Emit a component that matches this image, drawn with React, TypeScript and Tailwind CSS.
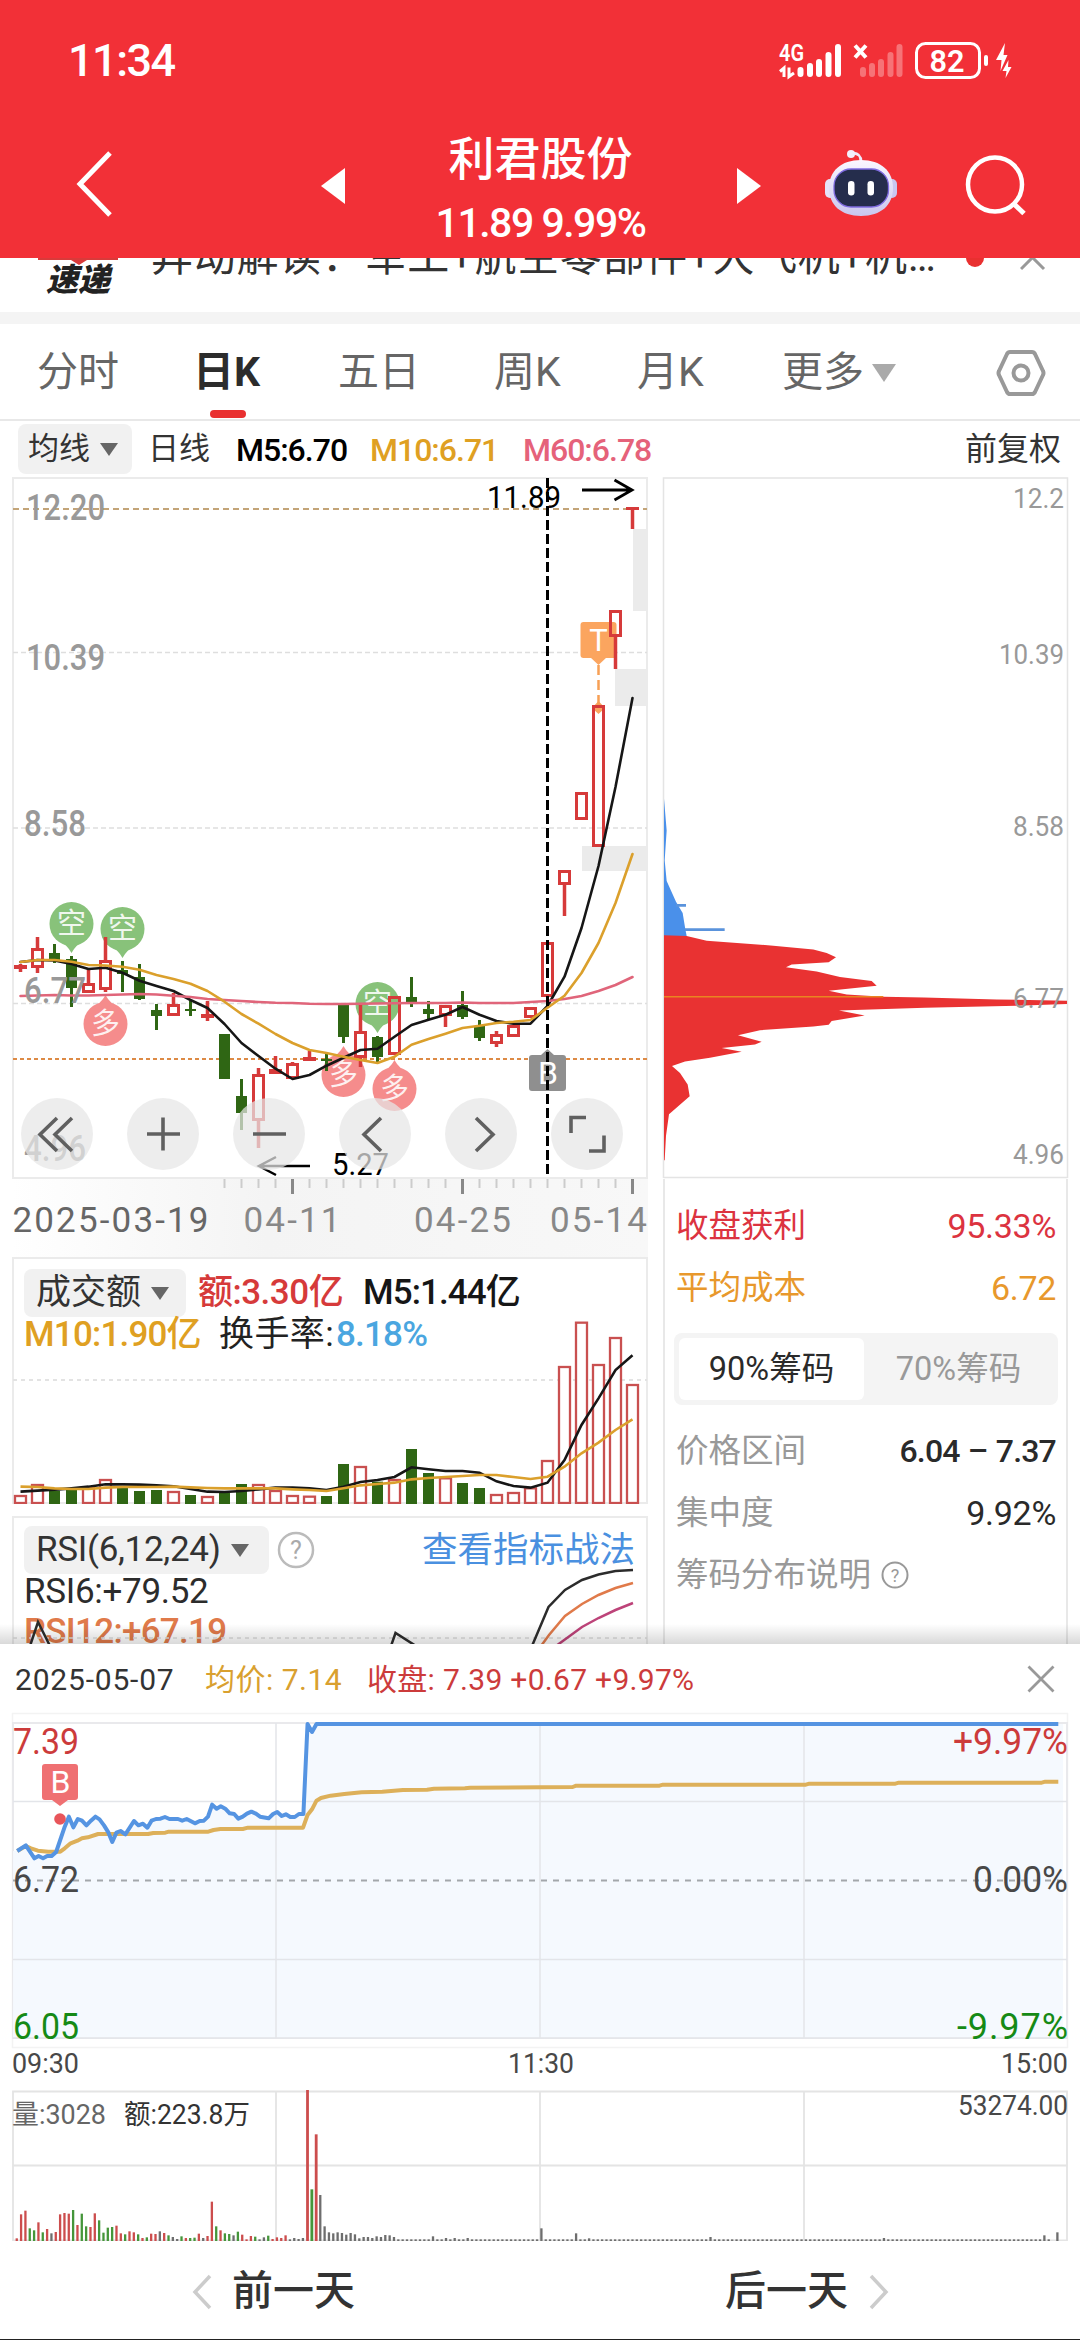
import React from "react";

type Side = "r" | "g";
type Candle = [Side, number, number, number, number];

const RED = "#d63a3a";
const GREEN = "#2f6614";
const GOLD = "#dba02c";

const px = (i: number) => 20.5 + 17 * i;

// side, high, body top, body bottom, low
const candles: Candle[] = [
  ["r", 964, 965, 969, 972], ["r", 937, 948, 968, 973], ["g", 944, 953, 961, 963], ["g", 956, 959, 988, 1007],
  ["r", 969, 983, 993, 993], ["r", 937, 960, 990, 992], ["g", 961, 970, 974, 992], ["g", 964, 977, 999, 1000],
  ["g", 1004, 1010, 1016, 1030], ["r", 993, 1004, 1016, 1016], ["g", 1001, 1009, 1011, 1016], ["r", 1001, 1014, 1018, 1021],
  ["g", 1034, 1034, 1079, 1079], ["g", 1079, 1096, 1113, 1130], ["r", 1068, 1074, 1121, 1148], ["r", 1056, 1069, 1074, 1074],
  ["r", 1062, 1063, 1079, 1079], ["r", 1051, 1057, 1061, 1061], ["g", 1054, 1059, 1061, 1071], ["g", 1004, 1004, 1037, 1043],
  ["r", 1003, 1031, 1058, 1067], ["g", 1036, 1037, 1057, 1062], ["r", 996, 996, 1055, 1055], ["g", 977, 997, 1002, 1007],
  ["g", 1001, 1009, 1014, 1019], ["r", 1005, 1005, 1016, 1027], ["g", 991, 1005, 1017, 1019], ["g", 1020, 1026, 1038, 1041],
  ["r", 1031, 1034, 1044, 1047], ["r", 1025, 1025, 1037, 1037], ["r", 1007, 1007, 1018, 1018], ["r", 942, 942, 997, 997],
  ["r", 870, 870, 885, 916], ["r", 792, 792, 820, 820], ["r", 705, 705, 847, 847], ["r", 610, 610, 637, 669],
  ["r", 507, 507, 509, 529],
];

const ma5 = [962, 960, 960.5, 964, 969, 967.7, 972.7, 980.7, 986, 991, 1000, 1008, 1024, 1043, 1056, 1068.7, 1079, 1075, 1065.7, 1057.7, 1050, 1048.7, 1036.7, 1025, 1019.7, 1014.7, 1007, 1014.7, 1021, 1023.7, 1023.7, 1006, 976.7, 928, 866, 787, 698];
const ma10 = [962, 960, 960, 961.7, 965, 965.5, 966.7, 969.7, 975, 979, 983.7, 991, 1001.7, 1014, 1023.7, 1034, 1043, 1050, 1053, 1056.7, 1060, 1063, 1056.7, 1044.7, 1039, 1033.7, 1028, 1025.7, 1023, 1021.7, 1020, 1007.7, 995.7, 973, 943, 903, 854];
const ma60 = [996, 995.5, 995, 995.5, 995.5, 995, 994.5, 994, 994.5, 995.7, 997, 999, 1000, 1001, 1002, 1002.7, 1003, 1003.7, 1004, 1004, 1003.7, 1003.5, 1003.3, 1003, 1003, 1003, 1002.5, 1003, 1003, 1003, 1002, 1001, 999, 996, 991, 985, 977];

const line = (ys: number[], from = 0) => ys.map((y, i) => `${px(i)},${y}`).slice(from).join(" ");

const volumes = [765, 732, 752, 745, 740, 717, 742, 753, 750, 753, 765, 768, 758, 732, 732, 750, 765, 767, 768, 672, 678, 725, 717, 627, 699, 712, 729, 744, 762, 756, 742, 660, 378, 245, 372, 291, 432].map((v) => 1240 + v / 3);
const vol5 = [755, 752, 749, 745, 740, 733, 733, 734, 736, 739, 747, 755, 756, 753, 748, 743, 743, 745, 750, 740, 726, 720, 711, 682, 688, 693, 693, 698, 724, 738, 743, 728, 660, 555, 475, 390, 346].map((v) => 1240 + v / 3);
const vol10 = [740, 741, 745, 747, 747, 743, 741, 741, 741, 740, 742, 744, 745, 745, 745, 745, 748, 750, 753, 745, 736, 732, 728, 718, 714, 711, 708, 705, 705, 711, 717, 710, 680, 640, 608, 570, 538].map((v) => 1240 + v / 3);

interface LabelProps {
  x: number;
  y: number;
  w: number;
  size: number;
  fill: string;
  weight?: number;
  spaced?: boolean;
  children: React.ReactNode;
}
/** y is the baseline, w the drawn width. */
function Label({ x, y, w, size, fill, weight = 400, spaced, children }: LabelProps) {
  return (
    <text x={x} y={y} fontSize={size} fontWeight={weight} fill={fill} textLength={w} lengthAdjust={spaced ? "spacing" : "spacingAndGlyphs"}>
      {children}
    </text>
  );
}

function Bubble({ x, y, up, text }: { x: number; y: number; up?: boolean; text: string }) {
  const fill = up ? "#f58c8c" : "#88c27a";
  const tip = up ? `M${x - 15},${y - 15} Q${x - 4},${y - 21} ${x},${y - 29} Q${x + 4},${y - 21} ${x + 15},${y - 15}Z` : `M${x - 15},${y + 15} Q${x - 4},${y + 21} ${x},${y + 29} Q${x + 4},${y + 21} ${x + 15},${y + 15}Z`;
  return (
    <g>
      <circle cx={x} cy={y} r="22" fill={fill} />
      <path d={tip} fill={fill} />
      <text x={x} y={y + 10} fontSize="29" fill="#fff" fillOpacity=".88" textAnchor="middle">{text}</text>
    </g>
  );
}

function Status() {
  return (
    <svg className="block h-[50px] w-[250px]" viewBox="770 35 250 50">
      <text x="779" y="60" fontSize="23" fontWeight="600" fill="#fff" textLength="25" lengthAdjust="spacingAndGlyphs">4G</text>
      <path d="M784 76V67l-4 3.500M789 66.500v9l5-3.500" stroke="#fff" strokeWidth="3" fill="none" />
      <g stroke="#fff" strokeWidth="6" strokeLinecap="round">
        <path d="M800.5 69V73M810 65V73M819 61V73M828.500 54V73M838 46V73" />
        <path d="M863 69V73M872 65V73M881 61V73M890.500 54V73M899.500 46V73" opacity=".32" />
      </g>
      <path d="M855 44.500l11 12M866 44.500l-11 12" stroke="#fff" strokeWidth="4" />
      <rect x="916.500" y="42.500" width="63" height="34" rx="9" fill="none" stroke="#fff" strokeWidth="3" />
      <rect x="984" y="54" width="4" height="11" rx="2" fill="#fff" />
      <text x="929.500" y="71" fontSize="32" fontWeight="600" fill="#fff" textLength="35" lengthAdjust="spacingAndGlyphs">82</text>
      <path d="M1005 42L996 59h5.500l-1 11 7-16h-4zM1008.500 59l-6 11h4l-1 7 6-11h-3.500z" fill="#fff" />
    </svg>
  );
}

function Robot() {
  return (
    <svg className="block h-[76px] w-[76px]" viewBox="823 145 76 76">
      <defs>
        <linearGradient id="shell" x1="0" y1="0" x2="0" y2="1">
          <stop offset="0" stopColor="#fbf7ff" />
          <stop offset="1" stopColor="#c9c6ee" />
        </linearGradient>
      </defs>
      <path d="M861 162c0-6-2-8.500-8-9" stroke="#f0eafa" strokeWidth="2.800" fill="none" />
      <circle cx="851" cy="154" r="4" fill="#f3effc" />
      <rect x="825" y="179" width="10" height="19" rx="5" fill="#e6e2f8" />
      <rect x="887" y="179" width="10" height="19" rx="5" fill="#c9c6f0" />
      <path d="M861 160c20 0 32 11 32 28s-12 28-32 28-32-11-32-28 12-28 32-28z" fill="url(#shell)" />
      <rect x="834" y="169" width="54.500" height="38" rx="17" fill="#252d4c" stroke="#7f6be0" strokeWidth="1.300" />
      <rect x="848" y="181" width="6.500" height="14.500" rx="3.200" fill="#fff" />
      <rect x="867.500" y="181" width="6.500" height="14.500" rx="3.200" fill="#fff" />
    </svg>
  );
}

function Header() {
  return (
    <header className="flex h-[258px] flex-col bg-[#f23037] text-white">
      <div className="flex h-[122px] items-center justify-between pl-[68px] pr-[60px]">
        <span className="text-[45px] font-medium tracking-[-1.5px]">11:34</span>
        <Status />
      </div>
      <div className="flex h-[136px] items-start justify-between pl-[72px] pr-[50px]">
        <svg className="mt-6 block h-[76px] w-[44px]" viewBox="72 146 44 76">
          <path d="M110 153L80 184l30 31" stroke="#fff" strokeWidth="5" fill="none" />
        </svg>
        <div className="ml-[143px] flex w-[440px] items-start justify-between">
          <svg className="mt-[46px] h-9 w-6" viewBox="0 0 24 36"><path d="M24 0v36L0 18z" fill="#fff" /></svg>
          <div className="flex flex-col items-center pt-1">
            <h1 className="text-[46px] font-medium leading-[66px]">利君股份</h1>
            <p className="whitespace-nowrap text-[41px] font-medium leading-[62px] tracking-[-1.5px]">11.89 9.99%</p>
          </div>
          <svg className="mt-[46px] h-9 w-6" viewBox="0 0 24 36"><path d="M0 0v36l24-18z" fill="#fff" /></svg>
        </div>
        <div className="mt-[23px] ml-px flex gap-[63px]">
          <Robot />
          <svg className="block h-[76px] w-[68px]" viewBox="962 145 68 76">
            <circle cx="995" cy="184.500" r="27" stroke="#fff" strokeWidth="4.500" fill="none" />
            <path d="M1013 203l11 10.500" stroke="#fff" strokeWidth="5" />
          </svg>
        </div>
      </div>
    </header>
  );
}

function News() {
  return (
    <div className="flex h-[54px] items-start overflow-hidden bg-white">
      <div className="flex w-[151px] flex-col pl-[38px]">
        <svg className="block h-[7px] w-20" viewBox="0 0 80 7"><path d="M0 0h80v2H49l-8 5-8-5H0z" fill="#d93a3a" /></svg>
        <span className="ml-2 mt-[-2px] text-[32px] font-black italic leading-[34px] text-[#222]">速递</span>
      </div>
      <p className="mt-[-31px] w-[790px] whitespace-nowrap text-[42px] leading-[60px] tracking-[0.7px] text-[#333]">异动解读：军工+航空零部件+大飞机+机…</p>
      <span className="ml-[25px] mt-[-9px] h-[18px] w-[18px] rounded-full bg-[#e93030]" />
      <svg className="ml-[36px] mt-[-13px] block h-[26px] w-[26px]" viewBox="0 0 26 26"><path d="M1 1l23 23M24 1L1 24" stroke="#999" strokeWidth="3" /></svg>
    </div>
  );
}

function Tabs() {
  return (
    <nav className="flex h-[97px] items-center border-b-2 border-[#e8e8e8] pl-[37px] pt-[3px] text-[41px] text-[#666]">
      <span className="w-[156px]">分时</span>
      <span className="relative w-[145px] font-bold text-[#2c2c2c]">日K
        <i className="absolute left-[17px] top-[68px] h-2 w-9 rounded-full bg-[#e93030]" />
      </span>
      <span className="w-[156px]">五日</span>
      <span className="w-[143px]">周K</span>
      <span className="w-[145px]">月K</span>
      <span className="flex items-center gap-2">更多
        <svg className="h-[18px] w-6" viewBox="0 0 24 18"><path d="M0 0h24L12 18z" fill="#aaa" /></svg>
      </span>
      <svg className="ml-[100px] h-12 w-[50px]" viewBox="0 0 50 48" fill="none" stroke="#999" strokeWidth="4">
        <path d="M14 3h22q2 0 3 2l8 17q1 2 0 4l-8 17q-1 2-3 2H14q-2 0-3-2L3 26q-1-2 0-4l8-17q1-2 3-2z" strokeLinejoin="round" />
        <circle cx="25" cy="24" r="7.500" />
      </svg>
    </nav>
  );
}

const Down = () => (
  <svg className="h-[13px] w-[18px]" viewBox="0 0 18 13"><path d="M0 0h18L9 13z" fill="#666" /></svg>
);

function AverageLegend() {
  return (
    <div className="flex h-14 items-center pl-[18px] text-[31px] text-[#333]">
      <span className="flex h-[50px] w-[114px] items-center gap-[10px] rounded-lg bg-[#f1f1f1] pl-[10px]">均线<Down /></span>
      <span className="ml-4 w-[88px]">日线</span>
      <span className="w-[134px] pt-0.5 text-[32px] font-medium tracking-[-1px] text-black">M5:6.70</span>
      <span className="w-[153px] pt-0.5 text-[32px] font-medium tracking-[-1px] text-[#dfa022]">M10:6.71</span>
      <span className="pt-0.5 text-[32px] font-medium tracking-[-1px] text-[#e5627a]">M60:6.78</span>
      <span className="ml-auto pr-[19px] text-[32px]">前复权</span>
    </div>
  );
}

function Candles() {
  return (
    <svg className="block h-[780px] w-[660px]" viewBox="0 477 660 780">
      <defs>
        <linearGradient id="strip" x1="0" y1="0" x2="1" y2="0">
          <stop offset="0" stopColor="#fff" /><stop offset=".4" stopColor="#f4f4f4" /><stop offset="1" stopColor="#f8f8f8" />
        </linearGradient>
      </defs>
      <rect x="12" y="1178" width="636" height="79" fill="url(#strip)" />
      <rect x="13" y="478" width="634" height="700" fill="#fff" stroke="#ebebeb" strokeWidth="2" />
      <g fill="#ebebeb">
        <rect x="633" y="529" width="14" height="82" /><rect x="615" y="669" width="32" height="37" /><rect x="582" y="846" width="65" height="25" />
      </g>
      <g strokeWidth="1.500" strokeDasharray="5 3" stroke="#dedede">
        <path d="M13 652.500H647M13 828H647M13 1003.500H647" />
      </g>
      <path d="M13 509H647" stroke="#c3a478" strokeWidth="2" strokeDasharray="6 4" />
      <path d="M13 1059H647" stroke="#dd8a45" strokeWidth="2" strokeDasharray="4 3" />
      <Bubble x={71.5} y={924} text="空" />
      <Bubble x={122.500} y={929} text="空" />
      <Bubble x={377.500} y={1004} text="空" />
      <Bubble x={105.500} y={1024} up text="多" />
      <Bubble x={343.500} y={1075} up text="多" />
      <Bubble x={394.500} y={1089} up text="多" />
      <g fill="#fba55f">
        <rect x="580.500" y="622" width="36" height="36" rx="3" />
        <path d="M590 657h17l-8.500 8zM592 708l6.500-7 6.500 7-6.500 6z" />
        <path d="M598.500 665V706" stroke="#f7a055" strokeWidth="2.500" strokeDasharray="10 5" />
      </g>
      <text x="598.500" y="651" fontSize="31" fill="#fff" textAnchor="middle">T</text>
      <path d="M529 1058q0-3 3-3h9l6.500-6 6.500 6h9q3 0 3 3v30q0 3-3 3h-31q-3 0-3-3z" fill="#8f8f8f" />
      <text x="548" y="1084" fontSize="32" fill="#fff" textAnchor="middle">B</text>
      <g>
        {candles.map(([side, hi, top, bot, lo], i) => {
          const x = px(i);
          const thin = bot - top < 6;
          return side === "r" ? (
            <g key={i} fill={thin ? RED : "none"} stroke={RED} strokeWidth="3">
              <path d={`M${x} ${hi}V${top}M${x} ${bot}V${lo}`} strokeWidth="3.500" />
              {thin ? <rect x={x - 6.500} y={top} width="13" height={Math.max(bot - top, 3)} stroke="none" /> : <rect x={x - 5} y={top + 1.500} width="10" height={bot - top - 3} />}
            </g>
          ) : (
            <g key={i} fill={GREEN}>
              <rect x={x - 1.500} y={hi} width="3" height={lo - hi} />
              <rect x={x - 5.500} y={top} width="11" height={bot - top} />
            </g>
          );
        })}
      </g>
      <g fill="none" strokeWidth="2.600" strokeLinejoin="round" strokeLinecap="round">
        <polyline points={line(ma5)} stroke="#161616" />
        <polyline points={line(ma60)} stroke="#e0657a" />
        <polyline points={line(ma10)} stroke={GOLD} />
      </g>
      <Label x={26} y={520} w={79} size={36} fill="#999" weight={500}>12.20</Label>
      <Label x={26} y={670} w={79} size={36} fill="#999" weight={500}>10.39</Label>
      <Label x={24} y={836} w={62} size={36} fill="#999" weight={500}>8.58</Label>
      <Label x={24} y={1003} w={62} size={36} fill="#999" weight={500}>6.77</Label>
      <Label x={24} y={1161} w={62} size={36} fill="#999" weight={500}>4.96</Label>
      <path d="M547.500 478V1178" stroke="#000" strokeWidth="3" strokeDasharray="10 4" />
      <Label x={487} y={508} w={74} size={31} fill="#000">11.89</Label>
      <path d="M582 490H632M614.500 480L632 490L614.500 500" stroke="#000" strokeWidth="2.800" fill="none" />
      <path d="M310 1166H259M276 1157L259 1166L276 1175" stroke="#000" strokeWidth="2.500" fill="none" />
      <Label x={332} y={1175} w={57} size={31} fill="#000">5.27</Label>
      {[57, 163, 269, 375, 481, 587].map((x) => <circle key={x} cx={x} cy="1134" r="36" fill="#e6e6e6" fillOpacity=".72" />)}
      <g stroke="#606060" strokeWidth="3.600" fill="none">
        <path d="M57 1118L40 1134.500l17 16.500M72 1118l-17 16.500L72 1151" />
        <path d="M147 1134H180M163 1117.500V1150.500M253 1134H286" />
        <path d="M381 1118L364 1134.500l17 16.500M476 1118l17 16.500L476 1151" />
        <path d="M571 1133V1117.500H586M604 1135.500V1151H589" />
      </g>
      {candles.map((_, i) => i > 11 && (
        <path key={i} d={i % 10 === 6 ? `M${px(i)} 1179v15` : `M${px(i)} 1179v9`} stroke={i % 10 === 6 ? "#888" : "#ccc"} strokeWidth={i % 10 === 6 ? 3 : 2} />
      ))}
      <Label x={12.500} y={1232} w={196} size={35} fill="#666" spaced>2025-03-19</Label>
      <Label x={243.500} y={1232} w={97} size={35} fill="#888" spaced>04-11</Label>
      <Label x={414} y={1232} w={97} size={35} fill="#888" spaced>04-25</Label>
      <Label x={550} y={1232} w={97} size={35} fill="#888" spaced>05-14</Label>
    </svg>
  );
}

const Chip = ({ w, children }: { w: string; children: React.ReactNode }) => (
  <span className={`flex h-12 items-center gap-[10px] rounded-lg bg-[#f1f1f1] pl-3 text-[35px] text-[#333] ${w}`}>{children}<Down /></span>
);

function VolumePanel() {
  return (
    <section className="relative ml-3 h-[247px] w-[636px] border-2 border-[#ebebeb]">
      <svg className="absolute -left-[2px] -top-[2px] h-[247px] w-[636px]" viewBox="12 1257 636 247">
        <path d="M13 1380H647" stroke="#e3e3e3" strokeWidth="2" strokeDasharray="4 4" />
        {volumes.map((y, i) => candles[i][0] === "r"
          ? <rect key={i} x={px(i) - 5.500} y={y + 1} width="11" height={1502 - y} fill="#fff" stroke="#c95050" strokeWidth="2.300" />
          : <rect key={i} x={px(i) - 5.500} y={y} width="11" height={1504 - y} fill={GREEN} />)}
        <g fill="none" strokeWidth="2.600">
          <polyline points={line(vol5)} stroke="#161616" />
          <polyline points={line(vol10)} stroke={GOLD} />
        </g>
      </svg>
      <div className="relative pl-[10px] pt-[10px]">
        <div className="flex items-center text-[35px] font-medium leading-[48px]">
          <Chip w="w-[162px] font-normal">成交额</Chip>
          <span className="ml-3 w-[165px] tracking-[-0.5px] text-[#d63a3a]">额:3.30亿</span>
          <span className="tracking-[-0.9px] text-[#161616]">M5:1.44亿</span>
        </div>
        <div className="flex pt-px text-[35px] font-medium leading-[34px] tracking-[-0.8px]">
          <span className="w-[195px] text-[#dfa022]">M10:1.90亿</span>
          <span className="w-[117px] font-normal tracking-[0.4px] text-[#222]">换手率:</span>
          <span className="text-[#4aa6e0]">8.18%</span>
        </div>
      </div>
    </section>
  );
}

function RsiPanel() {
  return (
    <section className="relative ml-3 mt-3 h-[129px] w-[636px] border-2 border-b-0 border-[#ebebeb]">
      <div className="pl-[10px] pt-2">
        <div className="flex items-center">
          <Chip w="w-[245px] tracking-[-0.3px]">RSI(6,12,24)</Chip>
          <svg className="ml-2 h-[38px] w-[38px]" viewBox="0 0 38 38">
            <circle cx="19" cy="19" r="17" stroke="#bbb" strokeWidth="2.500" fill="none" />
            <text x="19" y="28" fontSize="25" fill="#aaa" textAnchor="middle">?</text>
          </svg>
          <span className="ml-auto pr-[11px] text-[35.500px] leading-[48px] text-[#4a90e0]">查看指标战法</span>
        </div>
        <div className="whitespace-nowrap text-[35px] leading-[40px] text-[#2c2c2c]">
          <p className="mt-[-2px] tracking-[-0.3px]">RSI6:+79.52</p>
          <p className="font-medium tracking-[-0.7px] text-[#e07a4a]">RSI12:+67.19</p>
        </div>
      </div>
      <svg className="absolute -left-[2px] -top-[2px] h-[129px] w-[636px]" viewBox="12 1516 636 129">
        <path d="M13 1638H647" stroke="#ddd" strokeWidth="1.500" strokeDasharray="4 4" />
        <g fill="none" strokeWidth="2.500">
          <path d="M532 1646L548.500 1607 565 1590 582 1580 598.500 1574.500 615.500 1571 633 1570M30 1646L38 1622 50 1646M391 1646L395.500 1633 416 1646" stroke="#2c2c2c" />
          <path d="M541 1646L549 1635 565 1616 582 1604 598.500 1595 615.500 1588 633 1583" stroke="#e07a4a" />
          <path d="M556 1646L582 1627 598.500 1618 615.500 1610 633 1603" stroke="#bd4379" />
        </g>
      </svg>
    </section>
  );
}

function ChipDistribution() {
  return (
    <svg className="block h-[702px] w-[420px]" viewBox="660 477 420 702">
      <path d="M663.500 1178V478H1067.500V1178" fill="none" stroke="#e4e4e4" strokeWidth="1.500" />
      <path d="M663.500 1177.500H1067.500" stroke="#e4e4e4" strokeWidth="1.500" />
      <g transform="translate(650 470) scale(.33333 .45918)">
        <path d="M42 716L50 785 44 850 50 895 78 940 98 965 106 1000 110 1015H42Z" fill="#4a90ea" />
        <path d="M78 948H108M104 1001H224" stroke="#5a93dc" strokeWidth="6" />
        <path d="M42 1013L110 1015 170 1025 370 1036 490 1044 530 1052 558 1061 536 1072 425 1077 408 1083 500 1092 570 1104 665 1113 680 1123 536 1134 590 1142 700 1147 822 1149 1040 1153 1251 1156V1163L1100 1167 825 1171 567 1177 644 1188 545 1200 536 1208 490 1212 330 1220 264 1231 335 1245 315 1251 215 1259 275 1267 180 1280 105 1288 66 1298 90 1313 113 1338 119 1364 57 1403 48 1450 44 1503H42Z" fill="#e93232" />
        <path d="M42 1147H700" stroke="#ea8420" strokeWidth="3.500" />
      </g>
      <Label x={1013} y={508} w={51} size={28} fill="#999">12.2</Label>
      <Label x={999} y={664} w={65} size={28} fill="#999">10.39</Label>
      <Label x={1013} y={836} w={51} size={28} fill="#999">8.58</Label>
      <Label x={1013} y={1008} w={51} size={28} fill="#999">6.77</Label>
      <Label x={1013} y={1164} w={51} size={28} fill="#999">4.96</Label>
    </svg>
  );
}

function Stat({ name, value, color }: { name: string; value: string; color: string }) {
  return (
    <div className={`flex h-[62px] items-center justify-between ${color}`}>
      <span className="text-[32.500px]">{name}</span>
      <span className="text-[34px] tracking-[-0.3px]">{value}</span>
    </div>
  );
}

function ChipStats() {
  return (
    <div className="ml-[3px] flex h-[466px] w-[405px] flex-col border-x-2 border-[#e8e8e8] pl-[11px] pr-[10px] pt-[16px]">
      <Stat name="收盘获利" value="95.33%" color="text-[#dc3340]" />
      <Stat name="平均成本" value="6.72" color="text-[#e8982c]" />
      <div className="-mx-0.5 mt-[14px] flex h-[72px] rounded-lg bg-[#f4f4f4] p-[5px] text-[32.500px]">
        <span className="flex w-[185px] items-center justify-center rounded-md bg-white text-[#2a2a2a]">90%筹码</span>
        <span className="flex flex-1 items-center justify-center text-[#999]">70%筹码</span>
      </div>
      <div className="mt-[15px] flex h-[62px] items-center justify-between">
        <span className="text-[32.500px] text-[#999]">价格区间</span>
        <span className="text-[32px] font-medium tracking-[-0.800px] text-[#2a2a2a] [word-spacing:1px]">6.04 – 7.37</span>
      </div>
      <div className="flex h-[62px] items-center justify-between">
        <span className="text-[32.500px] text-[#999]">集中度</span>
        <span className="text-[34px] tracking-[-0.3px] text-[#2a2a2a]">9.92%</span>
      </div>
      <div className="flex h-[62px] items-center gap-[10px] text-[32.500px] text-[#999]">筹码分布说明
        <svg className="h-7 w-7" viewBox="0 0 28 28">
          <circle cx="14" cy="14" r="12.500" stroke="#999" strokeWidth="2" fill="none" />
          <text x="14" y="20.500" fontSize="18" fill="#999" textAnchor="middle">?</text>
        </svg>
      </div>
    </div>
  );
}

const priceLine = "50,633 75,616 100,655 112,648 125,655 137,648 150,648 163,636 188,560 200,530 213,562 226,537 238,542 251,556 264,542 277,530 289,538 302,556 315,578 326,606 338,578 350,573 364,583 389,543 402,556 415,551 428,563 440,542 453,537 466,536 479,531 492,537 517,537 529,542 542,537 566,550 580,543 592,542 604,530 616,494 629,506 641,499 654,506 667,520 680,522 692,536 705,530 717,521 730,515 743,521 755,530 780,535 793,522 805,516 818,528 830,523 843,531 856,531 868,522 881,522 893,252 906,276 919,252 3073,252";
const averageLine = "50,633 75,618 90,625 110,632 140,635 175,635 188,625 205,610 225,602 238,595 255,592 285,582 430,582 445,579 480,578 490,575 605,575 620,570 640,567 705,567 720,563 880,563 893,525 906,508 919,482 932,474 960,467 1000,462 1050,457 1110,455 1170,450 1240,449 1260,446 1350,445 1365,443 1663,441 1673,437 1915,437 1925,434 2340,434 2350,431 2600,431 2610,428 3025,428 3035,425 3073,425";

function IntradayChart() {
  return (
    <svg className="block h-[378px] w-full" viewBox="0 1710 1080 378">
      <rect x="12.500" y="1713.500" width="1055" height="334" fill="none" stroke="#f3f3f3" strokeWidth="1.500" />
      <rect x="13" y="1723" width="1054" height="315" fill="none" stroke="#e9e9ec" strokeWidth="2" />
      <g transform="translate(0 1640) scale(.344388 .333333)">
        <polygon points={`38,633 ${priceLine} 3087,252 3087,1193 38,1193`} fill="#f5f9fe" />
      </g>
      <path d="M276 1723V2038M540 1723V2038M804 1723V2038M13 1801.500H1067M13 1959.500H1067M13 2038H1067" stroke="#e3e5e9" strokeWidth="1.500" />
      <path d="M13 1880.500H1067" stroke="#a3a7ab" strokeWidth="2" strokeDasharray="6 6" />
      <g transform="translate(0 1640) scale(.344388 .333333)" fill="none" strokeWidth="4" strokeLinejoin="round">
        <polyline points={averageLine} stroke="#ddb05a" vectorEffect="non-scaling-stroke" />
        <polyline points={priceLine} stroke="#5594e2" vectorEffect="non-scaling-stroke" />
      </g>
      <path d="M42 1767q0-3 3-3h30q3 0 3 3v30q0 3-3 3h-7l-8 6-8-6h-7q-3 0-3-3z" fill="#ef7072" />
      <circle cx="60" cy="1819" r="5.800" fill="#e8555a" />
      <text x="60.500" y="1793" fontSize="32" fill="#fff" textAnchor="middle">B</text>
      <Label x={13} y={1754} w={66} size={36} fill="#cc3b3b">7.39</Label>
      <Label x={13} y={1892} w={66} size={36} fill="#484848">6.72</Label>
      <Label x={13} y={2039} w={66} size={36} fill="#158a15">6.05</Label>
      <Label x={953} y={1754} w={115} size={36} fill="#cc3b3b">+9.97%</Label>
      <Label x={973} y={1892} w={95} size={36} fill="#484848">0.00%</Label>
      <Label x={957} y={2039} w={111} size={36} fill="#158a15" spaced>-9.97%</Label>
      <Label x={12} y={2073} w={67} size={28.500} fill="#484848">09:30</Label>
      <Label x={508} y={2073} w={66} size={28.500} fill="#484848">11:30</Label>
      <Label x={1001} y={2073} w={67} size={28.500} fill="#484848">15:00</Label>
    </svg>
  );
}

// bar tops and sides for the busy part of the session, one per minute
const minuteTops = [535, 463, 452, 505, 511, 487, 517, 507, 520, 516, 463, 459, 461, 450, 495, 461, 499, 501, 460, 481, 518, 503, 501, 497, 520, 523, 514, 517, 523, 534, 532, 521, 522, 514, 519, 526, 531, 537, 529, 534, 534, 533, 521, 534, 528, 425, 499, 511, 520, 522, 526, 515, 524, 538, 528, 530, 538, 532, 527, 537, 532, 534, 526, 538, 534, 537, 534, 90, 388, 223, 405, 499, 517, 520, 517, 519, 524, 519, 523, 535, 531, 531, 534, 529, 531, 525, 526, 531];
const minuteSides = "rrrggrgrkrrrrgrggrrggggrrgrrgrgrrkrgkkgrggrkrrgrggkgrrrgkkgrrrrkkkkrgr";
const spikes: Record<number, number> = { 96: 529, 99: 534, 101: 534, 104: 534, 121: 505, 129: 520, 132: 535, 160: 531, 200: 534, 237: 526, 239: 543, 240: 517 };

function IntradayVolume() {
  return (
    <svg className="block h-[153px] w-full" viewBox="0 2088 1080 153">
      <path d="M13 2091.500H1067V2240.500H13ZM276 2091V2240M540 2091V2240M804 2091V2240M13 2165.500H1067" fill="none" stroke="#e4e4e4" strokeWidth="1.800" />
      {Array.from({ length: 241 }, (_, i) => {
        const top = minuteTops[i] ?? spikes[i] ?? 538;
        const side = minuteSides[i] ?? "k";
        const y = 2060 + top / 3;
        return <rect key={i} x={15.600 + i * 4.336} y={y} width={i > 66 && i < 70 ? 2.800 : 2.300} height={2241 - y} fill={side === "r" ? "#cc4d4d" : side === "g" ? "#45963a" : "#6e6e6e"} />;
      })}
      <Label x={12} y={2124} w={94} size={27} fill="#666">量:3028</Label>
      <Label x={124} y={2124} w={126} size={27} fill="#333">额:223.8万</Label>
      <Label x={958} y={2115} w={110} size={28} fill="#484848">53274.00</Label>
    </svg>
  );
}

function IntradaySheet() {
  return (
    <section className="relative flex h-[696px] flex-col border-b border-[#222] bg-white">
      <div className="flex h-[66px] items-center pl-[15px] pt-1 text-[30px] text-[#333]">
        <span className="w-[190px] tracking-[0.8px]">2025-05-07</span>
        <span className="w-[162px] whitespace-pre tracking-[0.5px] text-[#d9a02f]">均价: 7.14</span>
        <span className="whitespace-pre tracking-[0.3px] text-[#cc3b3b]">收盘: 7.39 +0.67 +9.97%</span>
        <svg className="ml-auto mr-[25px] h-7 w-7" viewBox="0 0 28 28"><path d="M1.500 1.500l25 25M26.500 1.500l-25 25" stroke="#999" strokeWidth="2.800" /></svg>
      </div>
      <IntradayChart />
      <IntradayVolume />
      <div className="flex flex-1 items-center justify-between pl-[192px] pr-[191px] pt-1 text-[41px] text-[#333]">
        <button className="flex items-center gap-5 font-medium">
          <svg className="h-9 w-5" viewBox="0 0 20 36"><path d="M18 2L3 18l15 16" fill="none" stroke="#ccc" strokeWidth="3.500" /></svg>前一天
        </button>
        <button className="flex items-center gap-[21px] font-medium">后一天
          <svg className="h-9 w-5" viewBox="0 0 20 36"><path d="M2 2l15 16L2 34" fill="none" stroke="#ccc" strokeWidth="3.500" /></svg>
        </button>
      </div>
    </section>
  );
}

export default function App() {
  return (
    <main className="h-[2340px] w-[1080px] overflow-hidden bg-white font-[Roboto,'Noto_Sans_CJK_SC',sans-serif]">
      <Header />
      <div className="relative h-[1386px] overflow-hidden">
        <News />
        <div className="h-3 bg-[#f4f4f4]" />
        <Tabs />
        <AverageLegend />
        <div className="flex">
          <div className="w-[660px]">
            <Candles />
            <VolumePanel />
            <RsiPanel />
          </div>
          <div className="w-[420px]">
            <ChipDistribution />
            <ChipStats />
          </div>
        </div>
        <div className="absolute inset-x-0 bottom-0 h-5 bg-gradient-to-b from-transparent to-black/15" />
      </div>
      <IntradaySheet />
    </main>
  );
}
